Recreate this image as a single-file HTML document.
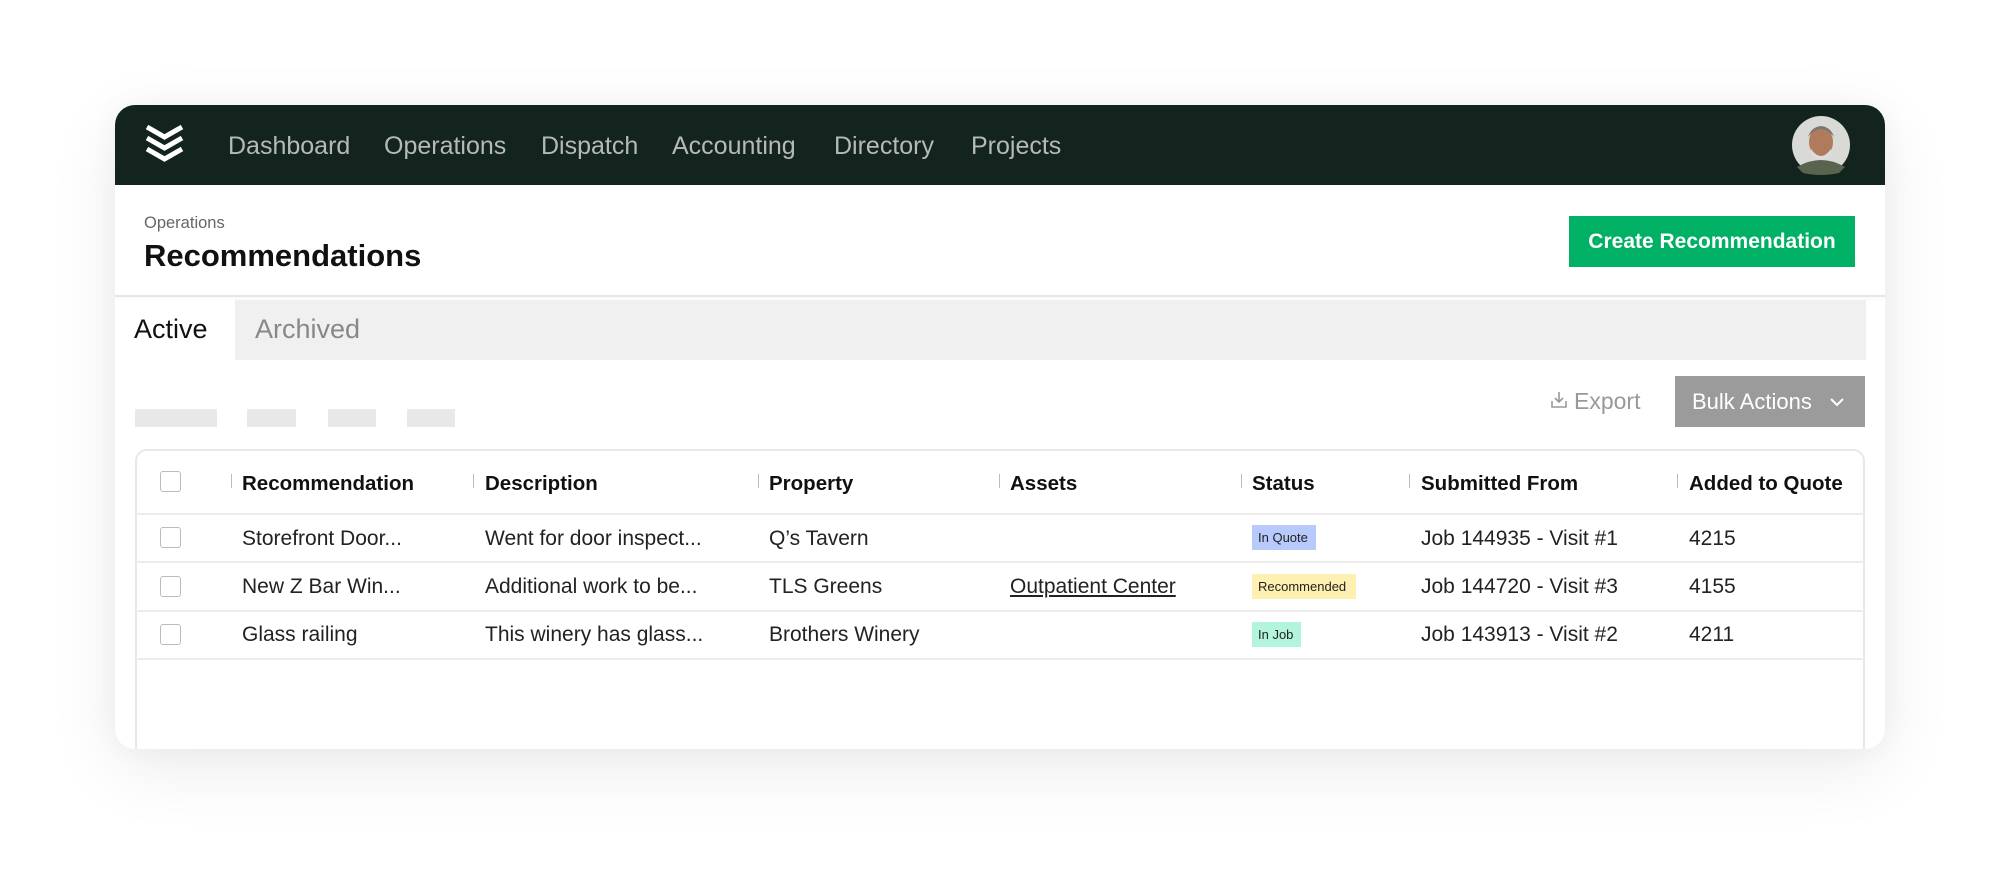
<!DOCTYPE html>
<html><head><meta charset="utf-8"><style>
*{box-sizing:border-box;margin:0;padding:0}
body{width:2000px;height:874px;background:#fff;font-family:"Liberation Sans",sans-serif;position:relative;overflow:hidden;color:#111}
.card{position:absolute;left:115px;top:105px;width:1770px;height:644px;background:#fff;border-radius:20px;box-shadow:0 20px 70px rgba(0,0,0,0.08),0 0 30px rgba(0,0,0,0.04);overflow:hidden}
.nav{position:absolute;left:0;top:0;width:1770px;height:80px;background:#13231d}
.nav a{position:absolute;top:27px;font-size:25px;color:#b5bab8;text-decoration:none}
.abs{position:absolute;white-space:nowrap}
.bar{position:absolute;background:#e8e8e8;top:304px;height:18px}
.th{position:absolute;font-size:20.5px;font-weight:bold;top:367px}
.sep{position:absolute;top:369px;width:1px;height:14px;background:#bbb}
.td{position:absolute;font-size:21px;color:#222}
.cb{position:absolute;left:45px;width:21px;height:21px;border:1.5px solid #bbb;border-radius:3px;background:#fff}
.hl{position:absolute;left:21px;width:1729px;height:2px;background:#ececec}
.badge{position:absolute;left:1137px;height:25px;font-size:13px;padding:5px 6px 0;color:#222}
</style></head><body>
<div class="card">
 <div class="nav">
  <svg class="abs" style="left:29px;top:19px" width="41" height="40" viewBox="0 0 41 40"><g fill="none" stroke="#fff" stroke-width="5" stroke-linejoin="miter"><path d="M3 3 L20.5 13 L38 3"/><path d="M3 14 L20.5 24 L38 14"/><path d="M3 25 L20.5 35 L38 25"/></g></svg>
  <a style="left:113px">Dashboard</a><a style="left:269px">Operations</a><a style="left:426px">Dispatch</a><a style="left:557px">Accounting</a><a style="left:719px">Directory</a><a style="left:856px">Projects</a>
  <svg class="abs" style="left:1676px;top:10px" width="60" height="60" viewBox="0 0 60 60"><circle cx="30" cy="30" r="29" fill="#d9d9d6"/><ellipse cx="30" cy="27" rx="12" ry="15" fill="#b07a5c"/><path d="M17 22 Q30 6 43 22 Q40 12 30 11 Q20 12 17 22Z" fill="#777"/><path d="M20 34 Q30 48 40 34 L40 40 Q30 48 20 40Z" fill="#ddd"/><path d="M6 52 Q30 38 54 52 L48 58 Q30 62 12 58Z" fill="#59644f"/></svg>
 </div>
 <div class="abs" style="left:29px;top:109px;font-size:16.5px;color:#666">Operations</div>
 <div class="abs" style="left:29px;top:133px;font-size:31px;font-weight:bold;color:#111">Recommendations</div>
 <div class="abs" style="left:1454px;top:111px;width:286px;height:51px;background:#00b065;color:#fff;font-size:21px;font-weight:bold;text-align:center;line-height:51px">Create Recommendation</div>
 <div class="abs" style="left:0;top:190px;width:1770px;height:2px;background:#e6e6e6;box-shadow:0 2px 4px rgba(0,0,0,0.05)"></div>
 <div class="abs" style="left:1px;top:195px;width:1750px;height:60px;background:#f0f0f0"></div>
 <div class="abs" style="left:1px;top:195px;width:119px;height:65px;background:#fff"></div>
 <div class="abs" style="left:19px;top:209px;font-size:27px;color:#111">Active</div>
 <div class="abs" style="left:140px;top:209px;font-size:27px;color:#888">Archived</div>
 <div class="bar" style="left:20px;width:82px"></div><div class="bar" style="left:132px;width:49px"></div><div class="bar" style="left:213px;width:48px"></div><div class="bar" style="left:292px;width:48px"></div>
 <svg class="abs" style="left:1436px;top:286px" width="16" height="18" viewBox="0 0 16 18"><g fill="none" stroke="#999" stroke-width="1.6"><path d="M8 1 V11 M4 7 L8 11 L12 7"/><path d="M1 10 V16 H15 V10"/></g></svg>
 <div class="abs" style="left:1459px;top:283px;font-size:23px;color:#999">Export</div>
 <div class="abs" style="left:1560px;top:271px;width:190px;height:51px;background:#9b9b9b;color:#fff;font-size:22px;line-height:51px;padding-left:17px">Bulk Actions</div>
 <svg class="abs" style="left:1714px;top:292px" width="16" height="10" viewBox="0 0 16 10"><path d="M2 2 L8 8 L14 2" fill="none" stroke="#fff" stroke-width="2"/></svg>
 <div class="abs" style="left:20px;top:344px;width:1730px;height:320px;border:2px solid #e8e8e8;border-radius:12px"></div>
 <div class="cb" style="top:366px"></div>
 <div class="sep" style="left:116px"></div><div class="sep" style="left:358px"></div><div class="sep" style="left:643px"></div><div class="sep" style="left:884px"></div><div class="sep" style="left:1126px"></div><div class="sep" style="left:1294px"></div><div class="sep" style="left:1562px"></div>
 <div class="th" style="left:127px">Recommendation</div><div class="th" style="left:370px">Description</div><div class="th" style="left:654px">Property</div><div class="th" style="left:895px">Assets</div><div class="th" style="left:1137px">Status</div><div class="th" style="left:1306px">Submitted From</div><div class="th" style="left:1574px">Added to Quote</div>
 <div class="hl" style="top:408px"></div><div class="hl" style="top:456px"></div><div class="hl" style="top:505px"></div><div class="hl" style="top:553px"></div>
 <div class="cb" style="top:422px"></div><div class="cb" style="top:471px"></div><div class="cb" style="top:519px"></div>
 <div class="td" style="left:127px;top:422px">Storefront Door...</div><div class="td" style="left:370px;top:422px">Went for door inspect...</div><div class="td" style="left:654px;top:422px">Q’s Tavern</div><div class="badge" style="top:420px;width:64px;background:#b8c9fb">In Quote</div><div class="td" style="left:1306px;top:422px">Job 144935 - Visit #1</div><div class="td" style="left:1574px;top:422px">4215</div>
 <div class="td" style="left:127px;top:470px">New Z Bar Win...</div><div class="td" style="left:370px;top:470px">Additional work to be...</div><div class="td" style="left:654px;top:470px">TLS Greens</div><div class="td" style="left:895px;top:470px;text-decoration:underline">Outpatient Center</div><div class="badge" style="top:469px;width:104px;background:#fdf0b0">Recommended</div><div class="td" style="left:1306px;top:470px">Job 144720 - Visit #3</div><div class="td" style="left:1574px;top:470px">4155</div>
 <div class="td" style="left:127px;top:518px">Glass railing</div><div class="td" style="left:370px;top:518px">This winery has glass...</div><div class="td" style="left:654px;top:518px">Brothers Winery</div><div class="badge" style="top:517px;width:49px;background:#b2f5dc">In Job</div><div class="td" style="left:1306px;top:518px">Job 143913 - Visit #2</div><div class="td" style="left:1574px;top:518px">4211</div>
</div>
</body></html>
